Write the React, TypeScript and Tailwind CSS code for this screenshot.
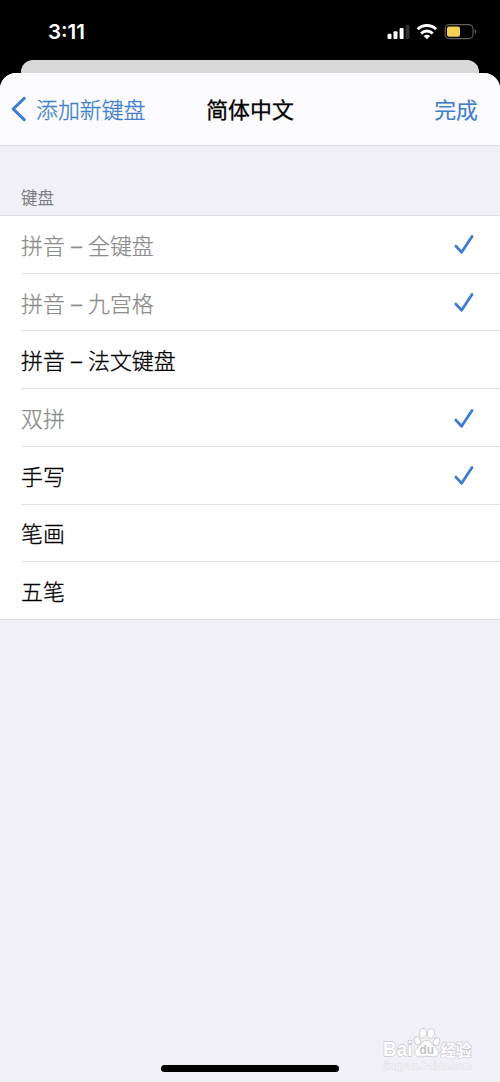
const keyboards = [
  { name: "拼音 – 全键盘", added: true, dimmed: true },
  { name: "拼音 – 九宫格", added: true, dimmed: true },
  { name: "拼音 – 法文键盘", added: false, dimmed: false },
  { name: "双拼", added: true, dimmed: true },
  { name: "手写", added: true, dimmed: false },
  { name: "笔画", added: false, dimmed: false },
  { name: "五笔", added: false, dimmed: false },
];

function StatusBar() {
  return (
    <div className="flex h-[60px] items-start justify-between pt-[20px] pr-[23px] pl-[48px]">
      <span className="text-[20.5px] leading-[24px] font-semibold text-white">3:11</span>
      <svg className="mt-[2px]" width="90" height="20" viewBox="387 22 90 20" fill="none">
        <g fill="#fff">
          <rect x="387.5" y="33.8" width="4" height="5.2" rx="1" />
          <rect x="393.5" y="31.2" width="4" height="7.8" rx="1" />
          <rect x="399.6" y="28" width="4" height="11" rx="1" />
          <rect x="405.6" y="24.7" width="3.8" height="14.3" rx="1" fill="#303030" />
        </g>
        <g stroke="#fff" strokeWidth="2.9">
          <path d="M417.7 29.2a13.2 13.2 0 0 1 18.4 0" />
          <path d="M421.1 33.4a8.2 8.2 0 0 1 11.6 0" />
        </g>
        <path d="M426.9 39.3l-3.2-3.2a4.5 4.5 0 0 1 6.4 0z" fill="#fff" />
        <rect x="445.2" y="24.6" width="27.8" height="14" rx="4" stroke="#655f56" strokeWidth="1.1" />
        <rect x="447" y="26.4" width="13" height="10.4" rx="2" fill="#f4d054" />
        <path d="M474.7 29.2c2 .7 2 4.1 0 4.8z" fill="#655f56" />
      </svg>
    </div>
  );
}

function Header() {
  return (
    <header className="grid h-[73px] grid-cols-3 items-center border-b border-[#dcdce0] bg-[#fbfbfd] text-[21.9px] leading-[32px]">
      <div className="flex items-center pl-[11px] whitespace-nowrap text-[#3f7fcb]">
        <svg width="16" height="26" viewBox="0 0 16 26" fill="none">
          <path d="M13.2 2.3L2.2 13l11 10.7" stroke="#3d7dcd" strokeWidth="3" strokeLinecap="round" strokeLinejoin="round" />
        </svg>
        <span className="ml-[9px] pt-[2px] font-light [-webkit-text-stroke:0.3px]">添加新键盘</span>
      </div>
      <h1 className="pt-[1px] text-center text-black [-webkit-text-stroke:0.3px]">简体中文</h1>
      <span className="pt-[1px] pr-[22px] text-right text-[#3f7fcb] [-webkit-text-stroke:0.15px]">完成</span>
    </header>
  );
}

function Check() {
  return (
    <svg className="mt-[2px]" width="22" height="22" viewBox="0 0 22 22" fill="none">
      <path d="M2.9 12.1l5.7 6.2L19 2.4" stroke="#3f7bd0" strokeWidth="2.8" strokeLinecap="round" strokeLinejoin="round" />
    </svg>
  );
}

function Watermark() {
  return (
    <div className="absolute top-[1026px] left-[382px]">
      <svg width="92" height="48" viewBox="0 0 92 48">
        <g fill="#fdfdfe" stroke="#cfcfd3" strokeWidth="1">
          <ellipse cx="35.5" cy="14.8" rx="3" ry="4.1" transform="rotate(-15 35.5 14.8)" />
          <ellipse cx="41" cy="7.2" rx="3.5" ry="4.9" />
          <ellipse cx="49" cy="7.6" rx="3.5" ry="4.9" transform="rotate(10 49 7.6)" />
          <ellipse cx="54.5" cy="15.7" rx="3" ry="4.1" transform="rotate(20 54.5 15.7)" />
          <path d="M44.7 14.5c-4.2 0-5.2 3.8-8.6 6.6-5.4 4.4-4 9.4 1.3 9.8 3 .2 4.7-.6 7.3-.6s4.4.8 7.2.6c5.6-.4 7-5.4 1.4-9.8-3.4-2.8-4.4-6.6-8.6-6.6z" />
        </g>
        <g fontFamily="Liberation Sans, sans-serif" fontWeight="700">
          <text x="1" y="30" fontSize="19.5" textLength="29.5" lengthAdjust="spacingAndGlyphs" fill="#fdfdfe" stroke="#c9c9ce" strokeWidth="1.3" paintOrder="stroke">Bai</text>
          <text x="37.5" y="28" fontSize="12" textLength="14.5" lengthAdjust="spacingAndGlyphs" fill="#c3c3c8">du</text>
        </g>
        <text x="58.5" y="29.5" fontSize="15.5" fontWeight="700" textLength="31" lengthAdjust="spacingAndGlyphs" fontFamily="Noto Sans CJK SC, sans-serif" fill="#fdfdfe" stroke="#c9c9ce" strokeWidth="1.2" paintOrder="stroke">经验</text>
        <text x="2" y="43" fontSize="9" textLength="88" lengthAdjust="spacingAndGlyphs" fontFamily="Liberation Sans, sans-serif" fill="#fafafc" stroke="#dcdce0" strokeWidth=".9" paintOrder="stroke">jingyan.baidu.com</text>
      </svg>
    </div>
  );
}

export default function App() {
  return (
    <div className="relative flex h-[1082px] w-[500px] flex-col overflow-hidden bg-black font-['Inter','Noto_Sans_CJK_SC',sans-serif]">
      <StatusBar />
      <div className="mx-[21px] h-[13px] shrink-0 rounded-t-[12px] bg-[#d9d9d9]" />
      <main className="flex flex-1 flex-col overflow-hidden rounded-t-[16px] bg-[#f1f0f6]">
        <Header />
        <h2 className="flex h-[70px] items-end border-b border-[#dedee1] pb-[5px] pl-[21px] text-[16.5px] leading-[24px] font-light text-[#737378] [-webkit-text-stroke:0.25px]">键盘</h2>
        <ul className="flex h-[404px] flex-col border-b border-[#dcdce0] bg-white pl-[21px] text-[21.9px] leading-[32px] font-light">
          {keyboards.map((keyboard) => (
            <li
              key={keyboard.name}
              className="flex flex-1 items-center justify-between border-b border-[#e1e1e3] pr-[25px] last:border-b-0"
            >
              <span className={keyboard.dimmed ? "pt-[3px] text-[#8c8c8c] [-webkit-text-stroke:0.25px]" : "pt-[3px] text-black [-webkit-text-stroke:0.3px]"}>{keyboard.name}</span>
              {keyboard.added && <Check />}
            </li>
          ))}
        </ul>
        <div className="mx-auto mt-auto mb-[10px] h-[7px] w-[178px] rounded-full bg-black" />
      </main>
      <Watermark />
    </div>
  );
}
